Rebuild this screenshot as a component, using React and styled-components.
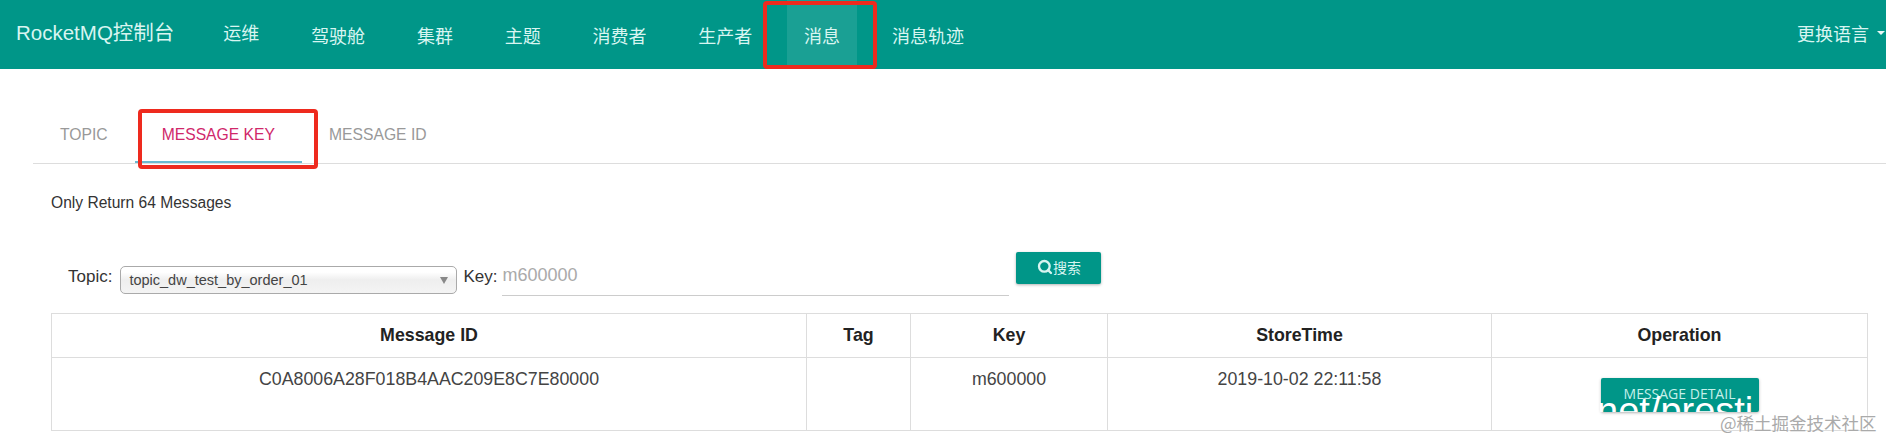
import React from 'react';
import styled, { createGlobalStyle } from 'styled-components';
import { Search } from 'lucide-react';

const FONT = `"Liberation Sans", "Noto Sans CJK SC", sans-serif`;

const GlobalStyle = createGlobalStyle`
  html, body {
    margin: 0;
    padding: 0;
    background: #fff;
    font-family: ${FONT};
    color: #333;
  }
`;

const Page = styled.div`
  position: relative;
  width: 1886px;
  height: 440px;
  overflow: hidden;
`;

const NavBar = styled.nav`
  display: flex;
  align-items: stretch;
  height: 69px;
  background: #009688;
  color: #d8f5f1;
`;

const Brand = styled.a`
  display: flex;
  align-items: center;
  padding: 0 32px 7px 16px;
  font-size: 20.5px;
`;

const NavLinks = styled.div`
  display: flex;
  gap: 17.8px;
  flex: 1;
`;

const NavLink = styled.a`
  display: flex;
  align-items: center;
  padding: 0 17px ${({ $raised }) => ($raised ? '5px' : '0')};
  font-size: 18px;
  background: ${({ $active }) => ($active ? 'rgba(255, 255, 255, 0.1)' : 'transparent')};
`;

const LangMenu = styled.a`
  display: flex;
  align-items: center;
  gap: 8px;
  padding: 0 1px 3px 0;
  font-size: 18px;
`;

const Caret = styled.span`
  width: 0;
  height: 0;
  border-left: 4px solid transparent;
  border-right: 4px solid transparent;
  border-top: 4px solid #e8f8f6;
`;

const TabBar = styled.div`
  display: flex;
  height: 95px;
  margin-left: 33px;
  border-bottom: 1px solid #ddd;
  box-sizing: border-box;
`;

const Tab = styled.a`
  display: flex;
  align-items: flex-end;
  padding: 0 27px 16px;
  font-size: 15.7px;
  line-height: 20px;
  color: ${({ $active }) => ($active ? '#d0286a' : '#999')};
  border-bottom: 2px solid ${({ $active }) => ($active ? '#6bb9d1' : 'transparent')};
`;

const Content = styled.div`
  padding: 30px 19px 0 51px;
`;

const Notice = styled.p`
  margin: 0;
  font-size: 15.6px;
  line-height: 18px;
  color: #333;
`;

const SearchForm = styled.form`
  display: flex;
  align-items: flex-start;
  height: 61px;
  margin-top: 40px;
  padding-left: 17px;
`;

const FieldLabel = styled.label`
  margin-top: 15px;
  font-size: 17px;
  line-height: 20px;
  color: #333;
`;

const SelectBox = styled.div`
  display: flex;
  align-items: center;
  justify-content: space-between;
  box-sizing: border-box;
  width: 337px;
  height: 28px;
  margin: 14px 6px 0 8px;
  padding: 0 8px;
  border: 1px solid #aaa;
  border-radius: 5px;
  background: linear-gradient(#fff 20%, #eee 50%, #f4f4f4);
  font-size: 14.5px;
  color: #444;
`;

const SelectArrow = styled.span`
  width: 0;
  height: 0;
  border-left: 4px solid transparent;
  border-right: 4px solid transparent;
  border-top: 7px solid #888;
`;

const KeyInput = styled.input`
  box-sizing: border-box;
  width: 507px;
  height: 44px;
  margin: 0 7px 0 5px;
  padding: 4px 0 0;
  border: 0;
  border-bottom: 1px solid #ccc;
  outline: none;
  font-family: ${FONT};
  font-size: 18px;
  &::placeholder {
    color: #aaa;
    opacity: 1;
  }
`;

const SearchButton = styled.button`
  display: flex;
  align-items: center;
  justify-content: center;
  width: 85px;
  height: 32px;
  padding: 0 0 2px;
  border: 0;
  border-radius: 2px;
  background: #009688;
  color: #d8f5f1;
  font-family: ${FONT};
  font-size: 14px;
  box-shadow: 0 1px 3px rgba(0, 0, 0, 0.3);
`;

const ResultTable = styled.table`
  width: 1816px;
  table-layout: fixed;
  border-collapse: collapse;
  font-size: 17.8px;
  th, td {
    border: 1px solid #ddd;
    text-align: center;
    padding: 0;
  }
  th {
    height: 43px;
    color: #222;
    font-weight: 700;
  }
  td {
    height: 61px;
    vertical-align: top;
    padding-top: 11px;
    color: #444;
  }
`;

const DetailButton = styled.button`
  display: block;
  width: 158px;
  height: 34px;
  margin: 9px auto 0;
  padding: 0 0 4px;
  border: 0;
  border-radius: 2px;
  background: #009688;
  color: #c5f0ea;
  font-family: "Open Sans", sans-serif;
  font-size: 14px;
  box-shadow: 0 1px 3px rgba(0, 0, 0, 0.3);
`;

const Annotation = styled.div`
  position: absolute;
  left: ${({ $x }) => $x}px;
  top: ${({ $y }) => $y}px;
  width: ${({ $w }) => $w}px;
  height: ${({ $h }) => $h}px;
  box-sizing: border-box;
  border: 4px solid #ee2a1e;
  border-radius: 4px;
`;

const WhiteOverlay = styled.div`
  position: absolute;
  left: 1600px;
  top: 393px;
  width: 158px;
  height: 19px;
  overflow: hidden;
  font-family: "Liberation Sans", sans-serif;
  font-size: 38px;
  line-height: 36px;
  color: #fff;
  white-space: nowrap;
  text-indent: -3px;
`;

const Watermark = styled.div`
  position: absolute;
  left: 1720px;
  top: 411px;
  font-family: "Noto Sans CJK SC", sans-serif;
  font-size: 17.5px;
  line-height: 24px;
  color: #aaa;
  white-space: nowrap;
  text-shadow: 0 0 2px #fff;
`;

const navItems = ['运维', '驾驶舱', '集群', '主题', '消费者', '生产者', '消息', '消息轨迹'];
const columns = [
  ['Message ID', 755],
  ['Tag', 104],
  ['Key', 197],
  ['StoreTime', 384],
  ['Operation', 376],
];

export default function App() {
  return (
    <Page>
      <GlobalStyle />
      <NavBar>
        <Brand>RocketMQ控制台</Brand>
        <NavLinks>
          {navItems.map((item, i) => (
            <NavLink key={item} $active={item === '消息'} $raised={i === 0}>
              {item}
            </NavLink>
          ))}
        </NavLinks>
        <LangMenu>
          更换语言
          <Caret />
        </LangMenu>
      </NavBar>

      <TabBar>
        <Tab>TOPIC</Tab>
        <Tab $active>MESSAGE KEY</Tab>
        <Tab>MESSAGE ID</Tab>
      </TabBar>

      <Content>
        <Notice>Only Return 64 Messages</Notice>
        <SearchForm>
          <FieldLabel>Topic:</FieldLabel>
          <SelectBox>
            topic_dw_test_by_order_01
            <SelectArrow />
          </SelectBox>
          <FieldLabel>Key:</FieldLabel>
          <KeyInput placeholder="m600000" />
          <SearchButton type="button">
            <Search size={16} strokeWidth={3.5} />
            搜索
          </SearchButton>
        </SearchForm>
        <ResultTable>
          <colgroup>
            {columns.map(([name, width]) => (
              <col key={name} width={width} />
            ))}
          </colgroup>
          <thead>
            <tr>
              {columns.map(([name]) => (
                <th key={name}>{name}</th>
              ))}
            </tr>
          </thead>
          <tbody>
            <tr>
              <td>C0A8006A28F018B4AAC209E8C7E80000</td>
              <td />
              <td>m600000</td>
              <td>2019-10-02 22:11:58</td>
              <td>
                <DetailButton type="button">MESSAGE DETAIL</DetailButton>
              </td>
            </tr>
          </tbody>
        </ResultTable>
      </Content>

      <Annotation $x={763} $y={1} $w={114} $h={68} />
      <Annotation $x={138} $y={109} $w={180} $h={60} />
      <WhiteOverlay>net/presti</WhiteOverlay>
      <Watermark>@稀土掘金技术社区</Watermark>
    </Page>
  );
}
